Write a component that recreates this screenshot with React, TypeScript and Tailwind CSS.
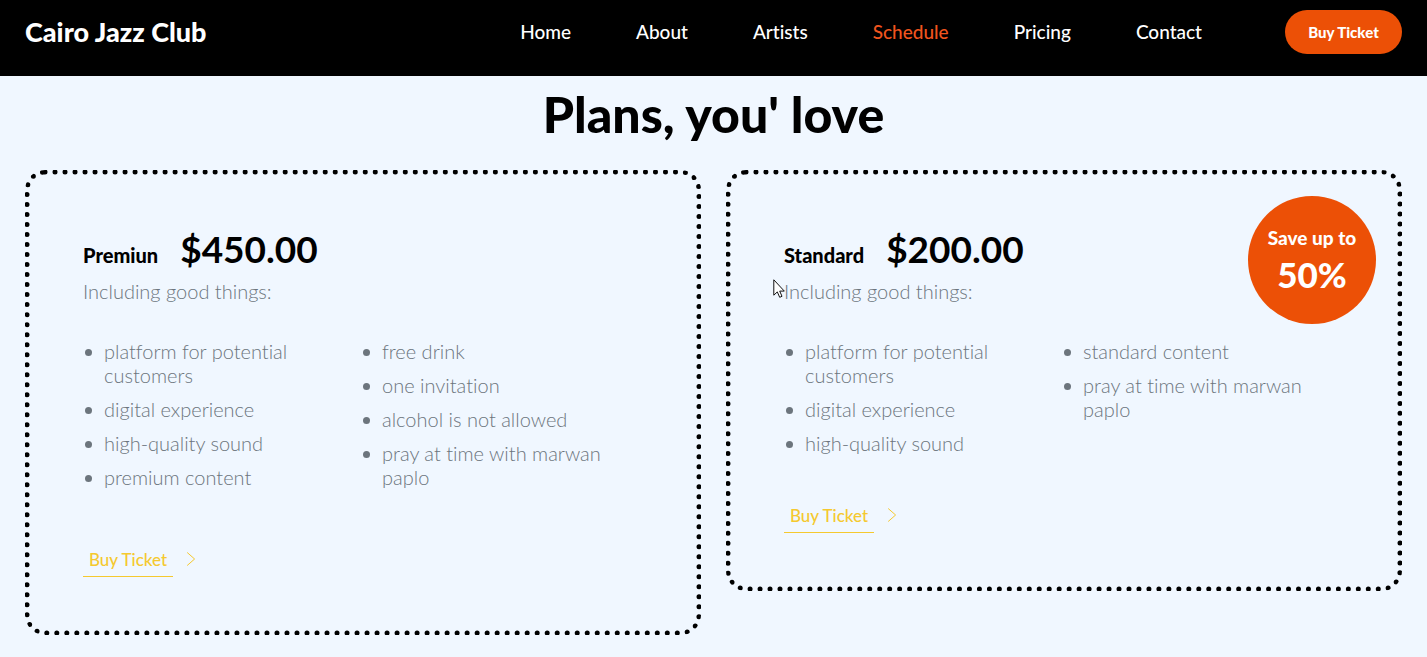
import React from "react";

type Plan = {
  name: string;
  price: string;
  columns: string[][];
  actionClass: string;
  badge?: { label: string; value: string };
};

const links = ["Home", "About", "Artists", "Schedule", "Pricing", "Contact"];

const plans: Plan[] = [
  {
    name: "Premiun",
    price: "$450.00",
    columns: [
      ["platform for potential customers", "digital experience", "high-quality sound", "premium content"],
      ["free drink", "one invitation", "alcohol is not allowed", "pray at time with marwan paplo"],
    ],
    actionClass: "mt-[58px]",
  },
  {
    name: "Standard",
    price: "$200.00",
    columns: [
      ["platform for potential customers", "digital experience", "high-quality sound"],
      ["standard content", "pray at time with marwan paplo"],
    ],
    actionClass: "mt-12",
    badge: { label: "Save up to", value: "50%" },
  },
];

function Header() {
  return (
    <header className="flex items-center bg-black px-[25px] pt-[10px] pb-[22px] text-white">
      <a href="#home" className="text-[27px] leading-[44px] font-black">
        Cairo Jazz Club
      </a>
      <nav className="mr-[83px] ml-auto flex gap-[65px] text-[19px] leading-[26px] font-medium">
        {links.map((label) => (
          <a
            key={label}
            href={`#${label.toLowerCase()}`}
            className={label === "Schedule" ? "text-[#f0541e]" : "text-white"}
          >
            {label}
          </a>
        ))}
      </nav>
      <button type="button" className="h-11 w-[117px] rounded-full bg-[#ec5006] text-[15px] font-black">
        Buy Ticket
      </button>
    </header>
  );
}

function PlanCard({ plan }: { plan: Plan }) {
  return (
    <article className="relative rounded-[20px] border-[5px] border-dotted border-black p-[53px]">
      <div className="flex items-baseline gap-[22px]">
        <h2 className="text-[20px] leading-6 font-black">{plan.name}</h2>
        <p className="text-[37px] leading-[42px] font-bold">{plan.price}</p>
      </div>
      <p className="mt-[9px] text-[20px] leading-6 font-light text-[#6c757d]">Including good things:</p>
      <div className="mt-9 grid grid-cols-2 pr-1 text-[20px] leading-6 font-light text-[#6c757d]">
        {plan.columns.map((items, i) => (
          <ul key={i} className="flex flex-col gap-[10px] pr-6">
            {items.map((item) => (
              <li key={item} className="flex gap-3">
                <span className="mt-[10px] ml-[2px] size-[7px] shrink-0 rounded-full bg-[#6c757d]" />
                <span>{item}</span>
              </li>
            ))}
          </ul>
        ))}
      </div>
      <a href="#ticket" className={`flex w-fit items-start gap-[13px] text-[#f5c92f] ${plan.actionClass}`}>
        <span className="border-b border-[#f5c92f] px-[6px] pb-[3px] text-[17px] leading-[26px] font-medium">
          Buy Ticket
        </span>
        <svg className="mt-1 h-4 w-[10px]" viewBox="0 0 10 16" fill="none" stroke="currentColor" aria-hidden="true">
          <path d="M1.2 1.5 8.6 8l-7.4 6.5" />
        </svg>
      </a>
      {plan.badge && (
        <div className="absolute top-[21px] right-[21px] flex size-32 flex-col items-center justify-center rounded-full bg-[#ec5006] font-black text-white">
          <span className="text-[19px] leading-7">{plan.badge.label}</span>
          <span className="text-[35px] leading-[44px]">{plan.badge.value}</span>
        </div>
      )}
    </article>
  );
}

function Cursor() {
  return (
    <svg className="absolute top-[279px] left-[773px] h-[19px] w-3" viewBox="0 0 12 19" aria-hidden="true">
      <path d="M.8.8v15.4l3.5-3.3 2.4 5.4 2.3-1-2.3-5.2h4.6z" fill="#fff" stroke="#111" strokeWidth="1" />
    </svg>
  );
}

export default function App() {
  return (
    <div className="relative min-h-screen bg-[#f0f7ff] font-['Lato',sans-serif] text-black [font-variant-ligatures:none]">
      <Header />
      <main className="px-[25px] pt-2">
        <h1 className="text-center text-[50px] leading-[60px] font-black">Plans, you' love</h1>
        <div className="mt-[26px] grid grid-cols-2 items-start gap-[25px]">
          {plans.map((plan) => (
            <PlanCard key={plan.name} plan={plan} />
          ))}
        </div>
      </main>
      <Cursor />
    </div>
  );
}
